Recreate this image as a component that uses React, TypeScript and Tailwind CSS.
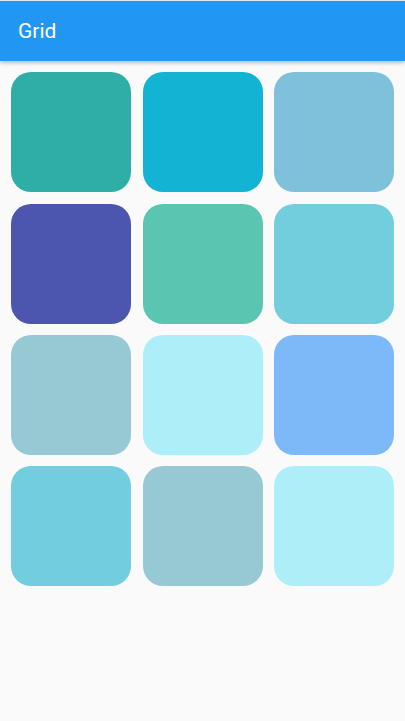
const tiles = [
  'bg-[#2faea8]',
  'bg-[#12b3d3]',
  'bg-[#7fc1db]',
  'bg-[#4c56ae]',
  'bg-[#5ac6b2]',
  'bg-[#72cddd]',
  'bg-[#96c9d4]',
  'bg-[#aeeef9]',
  'bg-[#7db8f8]',
  'bg-[#72cddf]',
  'bg-[#96c9d4]',
  'bg-[#aeeef9]',
];

export default function App() {
  return (
    <div className="w-[405px] h-[721px] bg-[#fafafa] flex flex-col font-['Roboto',sans-serif]">
      <header className="h-[61px] shrink-0 bg-[#2196f3] border-t border-[#d9e9f5] flex items-center pl-[18px] pt-[1px] shadow-[0_2px_4px_rgba(0,0,0,0.25)] z-10">
        <h1 className="text-white text-[21px] font-normal">Grid</h1>
      </header>
      <main className="grid grid-cols-3 gap-[11.25px] p-[11.25px]">
        {tiles.map((c, i) => (
          <div key={i} className={`h-[120px] rounded-[20px] ${c}`} />
        ))}
      </main>
    </div>
  );
}
